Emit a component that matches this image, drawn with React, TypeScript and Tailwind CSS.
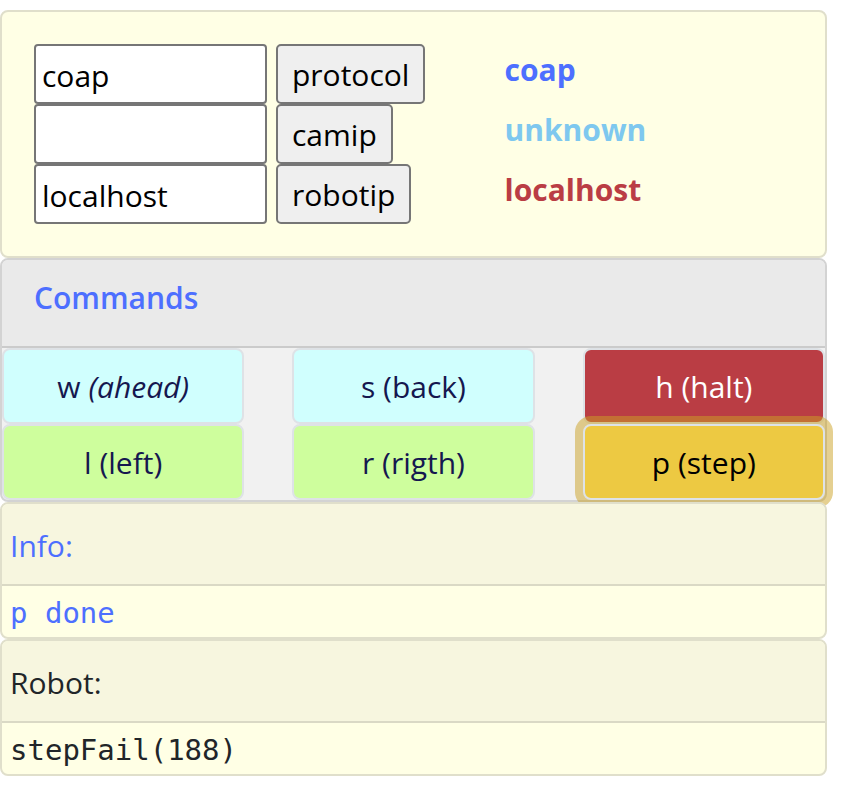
import { useState } from "react";
import type { ReactNode } from "react";

type Setting = { id: string; label: string; value: string; current: string; color: string };

const settings: Setting[] = [
  { id: "protocol", label: "protocol", value: "coap", current: "coap", color: "text-[#4d6fff]" },
  { id: "camip", label: "camip", value: "", current: "unknown", color: "text-[#7ec8ef]" },
  { id: "robotip", label: "robotip", value: "localhost", current: "localhost", color: "text-[#ba3d44]" },
];

type Command = { key: string; text: ReactNode; style: string };

const commands: Command[] = [
  { key: "w", text: <>w <em>(ahead)</em></>, style: "bg-[#d0fffe] text-[#15174f]" },
  { key: "s", text: "s (back)", style: "bg-[#d0fffe] text-[#15174f]" },
  { key: "h", text: "h (halt)", style: "bg-[#ba3d44] text-white" },
  { key: "l", text: "l (left)", style: "bg-[#cefe9d] text-[#15174f]" },
  { key: "r", text: "r (rigth)", style: "bg-[#cefe9d] text-[#15174f]" },
  { key: "p", text: "p (step)", style: "bg-[#edc942] text-black shadow-[0_0_0_8px_rgba(204,161,36,0.5)]" },
];

function SettingRow({ setting }: { setting: Setting }) {
  const [value, setValue] = useState(setting.value);
  return (
    <div className="flex gap-[9px]">
      <input
        id={setting.id}
        type="text"
        aria-label={setting.label}
        value={value}
        onChange={(e) => setValue(e.target.value)}
        className="h-[60px] w-[233px] rounded-[4px] border-2 border-[#767676] bg-white px-[6px] pt-[2px] text-black outline-none"
      />
      <button type="button" className="h-[60px] rounded-[5px] border-2 border-[#767676] bg-[#efefef] px-[14px] pt-[2px] text-black">
        {setting.label}
      </button>
    </div>
  );
}

function Panel({ title, tone, children }: { title: string; tone: string; children: ReactNode }) {
  return (
    <section className={`rounded-lg border-2 border-[#e0dfcb] bg-[#ffffe5] ${tone}`}>
      <header className="rounded-t-md border-b-2 border-[#dad9c5] bg-[#f7f6df] px-2 pt-[18px] pb-[14px]">{title}</header>
      <pre className="px-2 pt-[6px] pb-[2px] font-['DejaVu_Sans_Mono',monospace] text-[29px] leading-[43px]">{children}</pre>
    </section>
  );
}

export default function App() {
  return (
    <main className="flex flex-col pt-[10px] pr-4 font-['Open_Sans','Noto_Sans',sans-serif] text-[30px] leading-[48px] text-[#212529]">
      <section className="grid grid-cols-[62%_38%] rounded-lg border-2 border-[#e0dfcb] bg-[#ffffe5] p-8">
        <div>
          {settings.map((s) => (
            <SettingRow key={s.id} setting={s} />
          ))}
        </div>
        <div className="font-bold">
          {settings.map((s) => (
            <div key={s.id} className={`h-[60px] pt-[2px] ${s.color}`}>
              {s.current}
            </div>
          ))}
        </div>
      </section>

      <section className="rounded-lg border-2 border-[#d3d3d3] bg-[#f1f1f1]">
        <header className="rounded-t-md border-b-2 border-[#cbcbcb] bg-[#eaeaea] px-8 pt-[14px] pb-6">
          <h2 className="font-semibold text-[#4d6fff]">Commands</h2>
        </header>
        <div className="grid grid-cols-3 gap-x-12">
          {commands.map((c) => (
            <button
              key={c.key}
              type="button"
              className={`h-[76px] rounded-lg border-2 border-[#dee2e6] pt-[2px] ${c.style}`}
            >
              {c.text}
            </button>
          ))}
        </div>
      </section>

      <Panel title="Info:" tone="text-[#4d6fff]">p done</Panel>
      <Panel title="Robot:" tone="text-[#212529]">stepFail(188)</Panel>
    </main>
  );
}
